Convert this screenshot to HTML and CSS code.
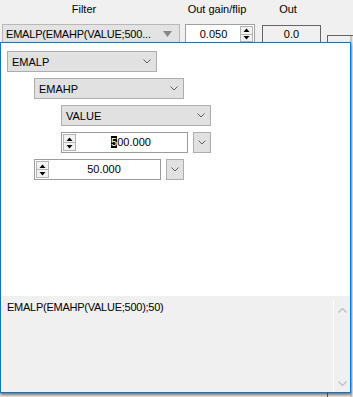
FILE: index.html
```html
<!DOCTYPE html>
<html lang="en">
  <head>
    <meta charset="UTF-8" />
    <meta name="viewport" content="width=device-width, initial-scale=1.0" />
    <title>Filter editor</title>
    <link rel="stylesheet" href="styles.css">
  </head>
  <body>
    <div class="window">
      <div class="labels">
        <span class="lbl lbl-filter">Filter</span>
        <span class="lbl lbl-gain">Out gain/flip</span>
        <span class="lbl lbl-out">Out</span>
      </div>
      <div class="controls">
        <div class="filter-combo">
          <span class="combo-text">EMALP(EMAHP(VALUE;500...</span>
          <svg class="old-arrow" width="9" height="6" viewBox="0 0 9 6"><polygon points="0,0 9,0 4.5,6" fill="#888"/></svg>
        </div>
        <div class="gain">
          <span class="gain-value">0.050</span>
          <div class="spin">
            <div class="spin-btn"><svg width="7" height="4" viewBox="0 0 7 4"><polygon points="0.5,4 6.5,4 3.5,0.5" fill="#000"/></svg></div>
            <div class="spin-btn"><svg width="7" height="4" viewBox="0 0 7 4"><polygon points="0.5,0 6.5,0 3.5,3.5" fill="#000"/></svg></div>
          </div>
        </div>
        <div class="out">0.0</div>
        <div class="next-box"></div>
      </div>
    </div>

    <div class="popup">
      <div class="tree">
        <div class="row">
          <div class="combo"><span>EMALP</span><svg class="chev" width="8" height="5" viewBox="0 0 8 5"><polyline points="0.5,0.5 4,4 7.5,0.5" fill="none" stroke="#606060"/></svg></div>
        </div>
        <div class="row ind-1">
          <div class="combo"><span>EMAHP</span><svg class="chev" width="8" height="5" viewBox="0 0 8 5"><polyline points="0.5,0.5 4,4 7.5,0.5" fill="none" stroke="#606060"/></svg></div>
        </div>
        <div class="row ind-2">
          <div class="combo"><span>VALUE</span><svg class="chev" width="8" height="5" viewBox="0 0 8 5"><polyline points="0.5,0.5 4,4 7.5,0.5" fill="none" stroke="#606060"/></svg></div>
        </div>
        <div class="row ind-2">
          <div class="num">
            <div class="spin">
              <div class="spin-btn"><svg width="7" height="4" viewBox="0 0 7 4"><polygon points="0.5,4 6.5,4 3.5,0.5" fill="#000"/></svg></div>
              <div class="spin-btn"><svg width="7" height="4" viewBox="0 0 7 4"><polygon points="0.5,0 6.5,0 3.5,3.5" fill="#000"/></svg></div>
            </div>
            <span class="num-value"><span class="caret">5</span>00.000</span>
          </div>
          <div class="drop"><svg width="8" height="5" viewBox="0 0 8 5"><polyline points="0.5,0.5 4,4 7.5,0.5" fill="none" stroke="#606060"/></svg></div>
        </div>
        <div class="row ind-1">
          <div class="num">
            <div class="spin">
              <div class="spin-btn"><svg width="7" height="4" viewBox="0 0 7 4"><polygon points="0.5,4 6.5,4 3.5,0.5" fill="#000"/></svg></div>
              <div class="spin-btn"><svg width="7" height="4" viewBox="0 0 7 4"><polygon points="0.5,0 6.5,0 3.5,3.5" fill="#000"/></svg></div>
            </div>
            <span class="num-value">50.000</span>
          </div>
          <div class="drop"><svg width="8" height="5" viewBox="0 0 8 5"><polyline points="0.5,0.5 4,4 7.5,0.5" fill="none" stroke="#606060"/></svg></div>
        </div>
      </div>
      <div class="expr">
        <div class="expr-text">EMALP(EMAHP(VALUE;500);50)</div>
        <div class="vscroll">
          <svg width="9" height="5" viewBox="0 0 9 5"><polyline points="0.5,4.5 4.5,0.5 8.5,4.5" fill="none" stroke="#c2c2c2" stroke-width="1.4"/></svg>
          <svg width="9" height="5" viewBox="0 0 9 5"><polyline points="0.5,0.5 4.5,4.5 8.5,0.5" fill="none" stroke="#c2c2c2" stroke-width="1.4"/></svg>
        </div>
      </div>
    </div>
  </body>
</html>
```

FILE: styles.css
```css
body {
  margin: 0;
  font-family: "Liberation Sans", Arial, sans-serif;
  font-size: 11px;
  color: #000;
  background-color: #f0f0f0;
  overflow: hidden;
  height: 397px;
  position: relative;
}
.labels {
  display: flex;
  height: 24px;
  padding-top: 3px;
  box-sizing: border-box;
  line-height: 13px;
}
.lbl {
  text-align: center;
  flex: none;
}
.lbl-filter {
  width: 168px;
}
.lbl-gain {
  width: 98px;
}
.lbl-out {
  width: 44px;
}
.controls {
  display: flex;
  align-items: flex-start;
  padding-left: 2px;
}
.controls > div {
  flex: none;
}
.filter-combo {
  width: 178px;
  height: 20px;
  box-sizing: border-box;
  border: 1px solid #b8b8b8;
  background-color: #e3e3e3;
  display: flex;
  align-items: center;
  padding: 0 7px 0 3px;
  letter-spacing: -0.2px;
}
.combo-text {
  flex: 1;
}
.gain {
  width: 70px;
  height: 20px;
  margin-left: 5px;
  box-sizing: border-box;
  border: 1px solid #a0a0a0;
  background-color: white;
  display: flex;
  padding: 1px;
}
.gain-value {
  flex: 1;
  text-align: center;
  line-height: 17px;
}
.spin {
  width: 13px;
  display: flex;
  flex-direction: column;
  border: 1px solid #b4b4b4;
  box-sizing: border-box;
  background-color: #f3f3f3;
}
.spin-btn {
  flex: 1;
  display: flex;
  align-items: center;
  justify-content: center;
}
.spin-btn + .spin-btn {
  border-top: 1px solid #b4b4b4;
}
.out {
  width: 59px;
  height: 19px;
  margin: 1px 0 0 7px;
  box-sizing: border-box;
  border: 1px solid #646464;
  text-align: center;
  line-height: 17px;
}
.next-box {
  width: 40px;
  height: 380px;
  margin: 11px 0 0 6px;
  border-top: 1px solid #646464;
  border-left: 1px solid #646464;
  background: linear-gradient(to right, #f0f0f0 22px, #c6c6c6 22px, #c6c6c6 24px, #e6e6e6 24px);
}
.popup {
  position: absolute;
  left: 0;
  top: 42px;
  width: 351px;
  height: 351px;
  box-sizing: border-box;
  border: 1px solid #0078d7;
  display: flex;
  flex-direction: column;
  box-shadow: 0 2px 3px rgba(0, 0, 0, 0.55);
  background-color: #f0f0f0;
}
.tree {
  height: 253px;
  background-color: white;
  padding: 8px 0 0 6px;
  box-sizing: border-box;
}
.row {
  display: flex;
  gap: 5px;
  height: 21px;
  margin-bottom: 6px;
}
.ind-1 {
  margin-left: 27px;
}
.ind-2 {
  margin-left: 54px;
}
.combo {
  width: 150px;
  box-sizing: border-box;
  border: 1px solid #adadad;
  background-color: #e1e1e1;
  display: flex;
  align-items: center;
  justify-content: space-between;
  padding: 0 5px 0 4px;
}
.num {
  width: 127px;
  box-sizing: border-box;
  border: 1px solid #9c9c9c;
  background-color: white;
  display: flex;
  padding: 1px;
}
.num-value {
  flex: 1;
  text-align: center;
  line-height: 17px;
}
.caret {
  background-color: #000;
  color: white;
}
.drop {
  width: 18px;
  box-sizing: border-box;
  border: 1px solid #adadad;
  background-color: #e1e1e1;
  display: flex;
  align-items: center;
  justify-content: center;
}
.expr {
  flex: 1;
  display: flex;
}
.expr-text {
  flex: 1;
  padding: 5px 0 0 6px;
  line-height: 13px;
  letter-spacing: -0.25px;
}
.vscroll {
  width: 17px;
  margin: 4px 0 1px;
  box-sizing: border-box;
  border-left: 1px solid white;
  display: flex;
  flex-direction: column;
  justify-content: space-between;
  align-items: center;
  padding: 8px 0 5px;
}
```
